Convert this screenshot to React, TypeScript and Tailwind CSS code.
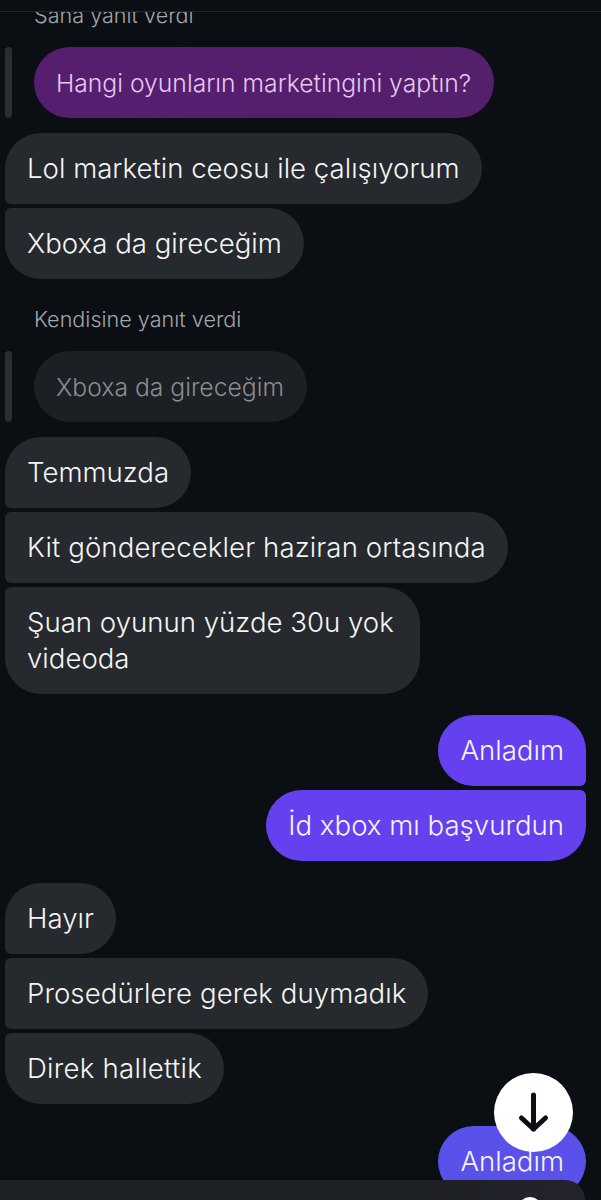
import { ReactNode } from 'react';

const bubbleText = 'text-[27.6px] leading-[36px] font-[350]';

function Theirs({ children, first, last, className = '' }: { children: ReactNode; first?: boolean; last?: boolean; className?: string }) {
  return (
    <div
      className={`w-fit bg-[#26292d] px-[22px] pb-[18px] pt-[17px] text-[#f4f5f6] ${bubbleText} rounded-r-[36px] ${first ? 'rounded-tl-[36px]' : 'rounded-tl-[6px]'} ${last ? 'rounded-bl-[36px]' : 'rounded-bl-[6px]'} ${className}`}
    >
      {children}
    </div>
  );
}

function Mine({ children, first, last, className = 'bg-[#6540ee]' }: { children: ReactNode; first?: boolean; last?: boolean; className?: string }) {
  return (
    <div
      className={`ml-auto w-fit px-[22px] pb-[18px] pt-[17px] text-[#f6f3ff] ${bubbleText} rounded-l-[36px] ${first ? 'rounded-tr-[36px]' : 'rounded-tr-[6px]'} ${last ? 'rounded-br-[36px]' : 'rounded-br-[6px]'} ${className}`}
    >
      {children}
    </div>
  );
}

function Reply({ children, className }: { children: ReactNode; className: string }) {
  return (
    <div className="flex gap-[22px]">
      <div className="w-[7px] shrink-0 rounded-full bg-[#2a2d32]" />
      <div className={`w-fit rounded-[36px] py-[17.5px] pl-[22px] pr-[23px] text-[24.7px] font-[350] leading-[36px] ${className}`}>{children}</div>
    </div>
  );
}

function Label({ children, className = '' }: { children: ReactNode; className?: string }) {
  return <p className={`pl-[29px] text-[21.6px] font-[350] leading-[24px] text-[#a3a6ac] ${className}`}>{children}</p>;
}

export default function App() {
  return (
    <div className="relative flex h-[1200px] w-[601px] flex-col overflow-hidden bg-[#0b0e13] font-['Inter',sans-serif]">
      <div className="h-[12px] shrink-0 border-b border-[#22252a] bg-[#0b0e13]" />
      <main className="flex flex-1 flex-col overflow-hidden pl-[5px] pr-[15px]">
        <Label className="-mt-[9px]">Sana yanıt verdi</Label>
        <div className="mt-[20px]">
          <Reply className="bg-gradient-to-r from-[#561e70] to-[#541f6b] text-[#e6c8f1]">Hangi oyunların marketingini yaptın?</Reply>
        </div>

        <div className="mt-[15px] flex flex-col gap-[4px]">
          <Theirs first>Lol marketin ceosu ile çalışıyorum</Theirs>
          <Theirs last>Xboxa da gireceğim</Theirs>
        </div>

        <Label className="mt-[28px]">Kendisine yanıt verdi</Label>
        <div className="mt-[20px]">
          <Reply className="bg-[#1c1f23] text-[#8b8d91]">Xboxa da gireceğim</Reply>
        </div>

        <div className="mt-[15px] flex flex-col gap-[4px]">
          <Theirs first>Temmuzda</Theirs>
          <Theirs className="tracking-[0.11px]">Kit gönderecekler haziran ortasında</Theirs>
          <Theirs last className="max-w-[415px]">Şuan oyunun yüzde 30u yok videoda</Theirs>
        </div>

        <div className="mt-[21px] flex flex-col gap-[4px]">
          <Mine first>Anladım</Mine>
          <Mine last>İd xbox mı başvurdun</Mine>
        </div>

        <div className="mt-[22px] flex flex-col gap-[4px]">
          <Theirs first>Hayır</Theirs>
          <Theirs className="tracking-[0.07px]">Prosedürlere gerek duymadık</Theirs>
          <Theirs last className="tracking-[0.25px]">Direk hallettik</Theirs>
        </div>

        <div className="mt-[22px]">
          <Mine first last className="bg-[#5a50ea]">Anladım</Mine>
        </div>
      </main>

      {/* scroll to bottom */}
      <button
        type="button"
        className="absolute left-[494px] top-[1073px] flex h-[79px] w-[79px] items-center justify-center rounded-full bg-white"
      >
        <svg width="40" height="44" viewBox="0 0 40 44" fill="none" stroke="#0b0e13" strokeWidth="5" strokeLinecap="round" strokeLinejoin="round">
          <path d="M19.5 4V38" />
          <path d="M7.5 27L19.5 38L31.5 27" />
        </svg>
      </button>

      {/* composer */}
      <div className="absolute bottom-0 left-0 h-[20px] w-[585px] overflow-hidden rounded-tr-[30px] bg-gradient-to-r from-[#1d2024] from-70% to-[#23232e]">
        <div className="absolute left-[518px] top-[17px] h-[24px] w-[24px] rounded-full bg-white" />
      </div>
    </div>
  );
}
